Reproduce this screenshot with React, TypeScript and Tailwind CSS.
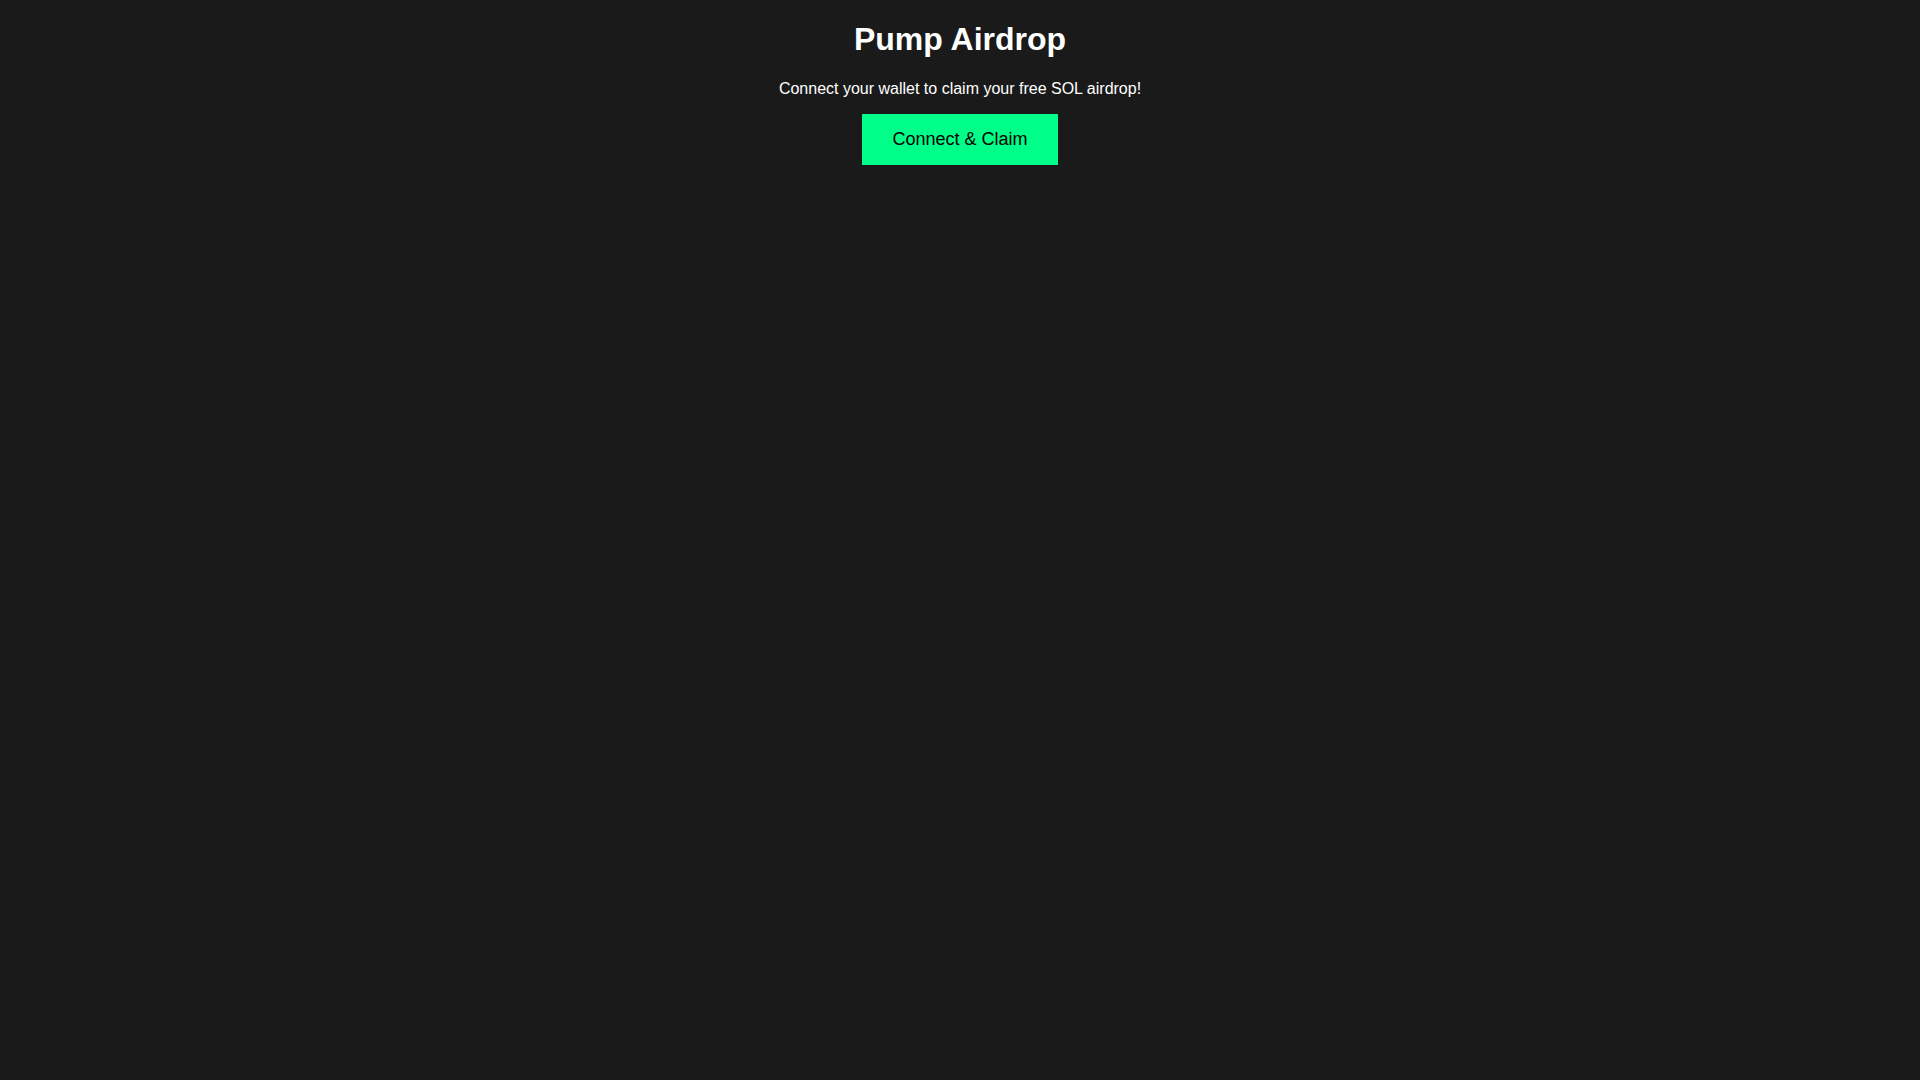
export default function App() {
  return (
    <div className="min-h-screen w-full bg-[#1a1a1a] text-white flex flex-col items-center text-center pt-[21.44px] font-['Liberation_Sans',Arial,sans-serif]">
      <h1 className="text-[32px] leading-[36.8px] font-bold m-0">Pump Airdrop</h1>
      <p className="text-[16px] leading-[18.4px] mt-[21.44px] mb-0">Connect your wallet to claim your free SOL airdrop!</p>
      <button className="mt-4 bg-[#00ff88] text-black text-[18px] leading-[20.7px] px-[30px] py-[15px] border-0 cursor-pointer">
        Connect &amp; Claim
      </button>
    </div>
  );
}
